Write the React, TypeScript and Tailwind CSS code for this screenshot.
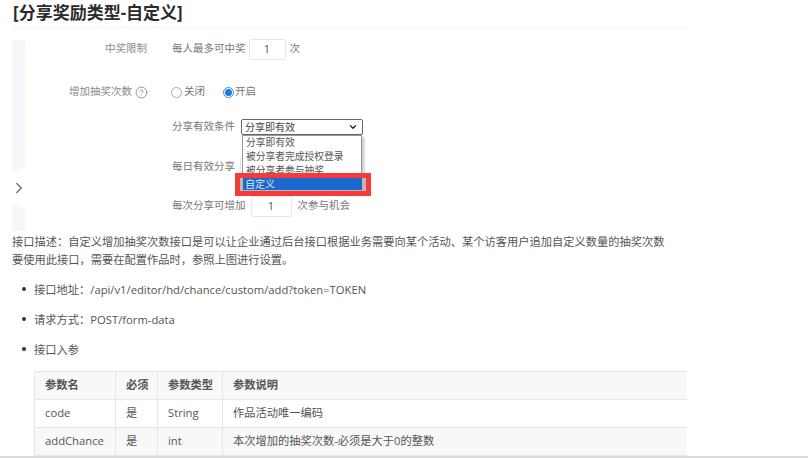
import type { ReactNode } from 'react';
import { ChevronRight, ChevronDown, CircleHelp } from 'lucide-react';

const FONT = '[font-family:"Open_Sans","Noto_Sans_CJK_SC",sans-serif]';

const params = [
  { name: 'code', required: '是', type: 'String', desc: '作品活动唯一编码' },
  { name: 'addChance', required: '是', type: 'int', desc: '本次增加的抽奖次数-必须是大于0的整数' },
];

function Row({ label, className, children }: { label?: ReactNode; className?: string; children: ReactNode }) {
  return (
    <div className={`flex h-[21px] items-center text-[10.5px] ${className ?? ''}`}>
      <div className="flex w-[122px] items-center justify-end text-[#8a8a8a]">{label}</div>
      <div className="ml-[25px] flex items-center text-[#777]">{children}</div>
    </div>
  );
}

function NumberBox({ className }: { className: string }) {
  return (
    <div className={`flex h-[21px] items-center justify-center rounded-[2px] border border-[#e4e7ed] text-[11px] text-[#555] ${className}`}>
      1
    </div>
  );
}

function FormShot() {
  return (
    <div className="ml-[12px] mt-[12px] flex h-[193px] w-[400px]">
      <div className="relative w-[13px] bg-[#f5f6fa]">
        <svg className="absolute left-0 top-[126px]" width="13" height="44" viewBox="0 0 13 44">
          <polygon points="0,6 13,0 13,44 0,38" fill="#ffffff" />
        </svg>
        <ChevronRight className="absolute left-[-2px] top-[139px] text-[#777]" size={18} strokeWidth={2} />
      </div>

      <div className="relative">
        <Row label="中奖限制" className="-mt-[1px]">
          <span>每人最多可中奖</span>
          <NumberBox className="ml-[3px] w-[37px]" />
          <span className="ml-[4px]">次</span>
        </Row>

        <Row
          label={
            <>
              增加抽奖次数
              <CircleHelp className="-mr-px ml-[3px] text-[#777]" size={13} strokeWidth={1.4} />
            </>
          }
          className="mt-[22px]"
        >
          <span className="-ml-px h-[11px] w-[11px] rounded-full border border-[#aaa] bg-white" />
          <span className="ml-[2px]">关闭</span>
          <span className="ml-[18px] flex h-[11px] w-[11px] items-center justify-center rounded-full border border-[#3b8ae8]">
            <span className="h-[7px] w-[7px] rounded-full bg-[#1a7ae0]" />
          </span>
          <span className="ml-px">开启</span>
        </Row>

        <Row className="mt-[14px]">
          <span>分享有效条件</span>
          <div className="ml-[6px] flex h-[16px] w-[122px] items-center justify-between rounded-[2px] border border-[#666] pl-[3px] pr-[4px] text-[10px] text-[#444]">
            <span>分享即有效</span>
            <ChevronDown size={10} strokeWidth={3} className="text-[#222]" />
          </div>
        </Row>

        <Row className="mt-[19px]">
          <span>每日有效分享</span>
          <NumberBox className="ml-[5px] w-[40px]" />
        </Row>

        <Row className="mt-[18px]">
          <span>每次分享可增加</span>
          <NumberBox className="ml-[5px] w-[41px]" />
          <span className="ml-[6px]">次参与机会</span>
        </Row>

        {/* open select list */}
        <div className="absolute left-[217px] top-[95px] h-[44px] w-[120px] border border-[#999] bg-white pl-[3px] text-[9.75px] leading-[14px] text-[#555] shadow-[2px_2px_3px_rgba(0,0,0,0.25)]">
          <div>分享即有效</div>
          <div>被分享者完成授权登录</div>
          <div>被分享者参与抽奖</div>
        </div>

        {/* red highlight */}
        <div className="absolute left-[210px] top-[133px] flex h-[23px] w-[136px] items-stretch border-[5px] border-[#f63a3a] bg-[#b9b9b9] pb-px pl-[3px] pr-[4px]">
          <div className="flex-1 bg-[#1a68d0] pl-[2px] text-[10px] leading-[12px] text-[#dfe8f7]">自定义</div>
        </div>
      </div>
    </div>
  );
}

export default function App() {
  return (
    <div className={`flex h-[458px] w-[808px] flex-col overflow-hidden bg-white text-[#555] ${FONT}`}>
      <h1 className="ml-[13px] mt-[2px] h-[25px] text-[17px] font-bold leading-[22px] text-[#2b2b2b]">[分享奖励类型-自定义]</h1>
      <div className="ml-[12px] h-px w-[676px] bg-[#f3f3f3]" />

      <FormShot />

      <p className="ml-[12px] mt-[2px] w-[660px] text-[11.25px] leading-[18px]">
        接口描述：自定义增加抽奖次数接口是可以让企业通过后台接口根据业务需要向某个活动、某个访客用户追加自定义数量的抽奖次数要使用此接口，需要在配置作品时，参照上图进行设置。
      </p>

      <ul className="ml-[22px] mt-[11px] flex flex-col gap-[11px] text-[11.25px] leading-[19px]">
        <li className="flex items-center">
          <span className="mr-[8px] h-[4px] w-[4px] rounded-full bg-[#333]" />接口地址：/api/v1/editor/hd/chance/custom/add?token=TOKEN
        </li>
        <li className="flex items-center">
          <span className="mr-[8px] h-[4px] w-[4px] rounded-full bg-[#333]" />请求方式：POST/form-data
        </li>
        <li className="flex items-center">
          <span className="mr-[8px] h-[4px] w-[4px] rounded-full bg-[#333]" />接口入参
        </li>
      </ul>

      <table className="ml-[34px] mt-[12px] w-[653px] table-fixed border-collapse text-[11.25px]">
        <colgroup>
          <col className="w-[81px]" />
          <col className="w-[42px]" />
          <col className="w-[65px]" />
          <col />
        </colgroup>
        <thead>
          <tr className="h-[28px] bg-[#f8f8f8] font-bold">
            <th className="border border-[#e6e6e6] pl-[10px] text-left">参数名</th>
            <th className="border border-[#e6e6e6] pl-[10px] text-left">必须</th>
            <th className="border border-[#e6e6e6] pl-[10px] text-left">参数类型</th>
            <th className="border-y border-l border-[#e6e6e6] pl-[10px] text-left">参数说明</th>
          </tr>
        </thead>
        <tbody>
          {params.map((p, i) => (
            <tr key={p.name} className={`h-[28px] ${i % 2 ? 'bg-[#f8f8f8]' : 'bg-white'}`}>
              <td className="border border-[#e6e6e6] pl-[10px]">{p.name}</td>
              <td className="border border-[#e6e6e6] pl-[10px]">{p.required}</td>
              <td className="border border-[#e6e6e6] pl-[10px]">{p.type}</td>
              <td className="border-y border-l border-[#e6e6e6] pl-[10px]">{p.desc}</td>
            </tr>
          ))}
        </tbody>
      </table>
      <div className="mt-auto h-[2px] shrink-0 bg-[#dcdcdc]" />
    </div>
  );
}
